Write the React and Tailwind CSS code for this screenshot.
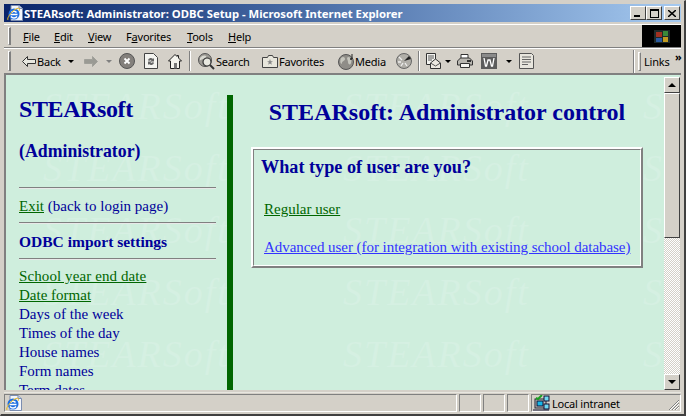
const serif = "font-['Liberation_Serif',serif]";

function IeIcon({ size = 16 }) {
  return (
    <svg width={size} height={size} viewBox="0 0 16 16" className="shrink-0">
      <path d="M4 .5h8l3.500 3v12H4z" fill="#f4f6fb" stroke="#7b8db0" />
      <path d="M12 .5v3h3.500" fill="#c8d4ea" stroke="#7b8db0" />
      <circle cx="7" cy="9" r="5.500" fill="#1f6fe0" />
      <path d="M3.500 9.500h7" stroke="#fff" strokeWidth="1.500" />
      <path d="M4.500 7.500a3 3 0 0 1 5 0M4 11.500c1.500 2 4.500 2 6 0" stroke="#fff" strokeWidth="1.500" fill="none" />
      <path d="M1 15c-1.500-1.500 3-9 9-11.500 2.500-1 3 .5 2 2.500" stroke="#e8b820" strokeWidth="1" fill="none" />
    </svg>
  );
}

function Grip() {
  return <span className="w-[3px] self-stretch my-[2px] shrink-0 border-l border-t border-white border-r-2 border-b border-r-[#808080] border-b-[#808080]" />;
}

function Caret({ c = "#000" }) {
  return <span className="shrink-0 w-0 h-0 border-l-[3px] border-r-[3px] border-t-[3px] border-l-transparent border-r-transparent" style={{ borderTopColor: c }} />;
}

function Sep() {
  return <span className="w-[2px] h-[20px] shrink-0 border-l border-[#808080] bg-white" />;
}

function U({ children }) {
  return <span className="underline">{children}</span>;
}

function MenuItem({ w, children }) {
  return <span className="shrink-0" style={{ width: w }}>{children}</span>;
}

function Win({ children }) {
  return (
    <span className="w-[16px] h-[14px] shrink-0 bg-[#D4D0C8] border border-t-white border-l-white border-r-[#404040] border-b-[#404040] flex items-center justify-center">
      {children}
    </span>
  );
}

function Watermark() {
  const cells = Array.from({ length: 15 });
  return (
    <div aria-hidden="true" className="absolute left-[37px] top-[9px] grid grid-cols-[300px_300px_22px] auto-rows-[62px] pointer-events-none">
      {cells.map((_, i) => (
        <span key={i} className={`${serif} italic text-[38px] leading-[44px] tracking-[2px] text-[#D5F0E2] whitespace-nowrap`}>{i % 3 === 2 ? "S" : "STEARSoft"}</span>
      ))}
    </div>
  );
}

function SbButton({ up }) {
  return (
    <div className="h-[16px] w-[16px] shrink-0 bg-[#D4D0C8] border border-t-white border-l-white border-r-[#404040] border-b-[#404040] flex items-center justify-center">
      <span className={`w-0 h-0 border-l-[4px] border-r-[4px] border-l-transparent border-r-transparent ${up ? "border-b-[4px] border-b-black" : "border-t-[4px] border-t-black"}`} />
    </div>
  );
}

function Panel({ w }) {
  return <span className="h-[18px] shrink-0 border border-t-[#808080] border-l-[#808080] border-r-white border-b-white" style={{ width: w }} />;
}

export default function App() {
  return (
    <div className="w-[686px] h-[416px] overflow-hidden bg-[#D4D0C8] border-t-[1px] border-l-[1px] border-t-[#D4D0C8] border-l-[#D4D0C8] border-r-2 border-b-2 border-r-[#404040] border-b-[#404040] flex flex-col font-['Noto_Sans',sans-serif] text-[11px] tracking-[-0.2px] leading-[13px] text-black">
      {/* title bar */}
      <div className="mt-[3px] mx-[3px] h-[18px] shrink-0 bg-gradient-to-r from-[#0A246A] to-[#A6CAF0] flex items-center pl-[3px] pr-[1px]">
        <IeIcon />
        <span className="ml-[1px] font-bold text-[11.300px] tracking-[0px] text-white whitespace-nowrap">STEARsoft: Administrator: ODBC Setup - Microsoft Internet Explorer</span>
        <span className="flex-1" />
        <Win><span className="w-[6px] h-[2px] bg-black mt-[6px] mr-[2px]" /></Win>
        <Win><span className="w-[9px] h-[9px] border border-black border-t-2" /></Win>
        <span className="w-[2px]" />
        <Win>
          <svg width="8" height="7" viewBox="0 0 8 7"><path d="M0 0l8 7M8 0L0 7" stroke="#000" strokeWidth="1.500" /></svg>
        </Win>
      </div>
      {/* menu band */}
      <div className="mt-[2px] mx-[3px] h-[23px] shrink-0 border-t border-white flex items-center pl-[4px] relative">
        <Grip />
        <div className="flex items-center ml-[12px]">
          <MenuItem w={31}><U>F</U>ile</MenuItem>
          <MenuItem w={34}><U>E</U>dit</MenuItem>
          <MenuItem w={38}><U>V</U>iew</MenuItem>
          <MenuItem w={61}>F<U>a</U>vorites</MenuItem>
          <MenuItem w={41}><U>T</U>ools</MenuItem>
          <MenuItem w={30}><U>H</U>elp</MenuItem>
        </div>
        <span className="flex-1" />
        <div className="w-[39px] h-[22px] bg-black flex items-center justify-center">
          <svg width="18" height="16" viewBox="0 0 18 16">
            <rect x="1" y="2" width="16" height="13" fill="#1e2a2a" />
            <rect x="3" y="4" width="6" height="5" fill="#a03020" />
            <rect x="10" y="3" width="5" height="5" fill="#3a8a3a" />
            <rect x="3" y="10" width="6" height="4" fill="#2a5aa0" />
            <rect x="10" y="9" width="5" height="5" fill="#c09a20" />
          </svg>
        </div>
      </div>
      {/* toolbar band */}
      <div className="mx-[3px] h-[26px] shrink-0 border-t border-t-[#808080] flex flex-col">
        <div className="h-[25px] border-t border-white flex items-center pl-[4px] relative">
          <Grip />
          <span className="w-[11px] shrink-0" />
          <svg width="14" height="11" viewBox="0 0 14 11" className="shrink-0"><path d="M5.500 .5L.5 5.500l5 5v-3h8v-4h-8z" fill="#e8e8e0" stroke="#333" /></svg>
          <span className="w-[23px] ml-[1px] shrink-0">Back</span>
          <span className="w-[8px] shrink-0" />
          <Caret />
          <span className="w-[10px] shrink-0" />
          <svg width="14" height="11" viewBox="0 0 14 11" className="shrink-0"><path d="M8.500 .5l5 5-5 5v-3h-8v-4h8z" fill="#9a9a94" stroke="#a0a09a" /></svg>
          <span className="w-[8px] shrink-0" />
          <Caret c="#808080" />
          <span className="w-[7px] shrink-0" />
          <svg width="16" height="16" viewBox="0 0 16 16" className="shrink-0">
            <circle cx="8" cy="8" r="7.500" fill="#84807c" stroke="#555" />
            <path d="M5.500 5.500l5 5M10.500 5.500l-5 5" stroke="#fff" strokeWidth="1.800" />
          </svg>
          <span className="w-[9px] shrink-0" />
          <svg width="14" height="16" viewBox="0 0 14 16" className="shrink-0">
            <path d="M.5.5h9l4 4v11H.5z" fill="#f4f4f0" stroke="#444" />
            <path d="M4 7a3 3 0 0 1 5-1l1-1v3.500H6.500l1-1a2 2 0 0 0-2.500 .5zM10 10a3 3 0 0 1-5 1l-1 1V8.500h3.500l-1 1a2 2 0 0 0 2.500-.5z" fill="#666" />
          </svg>
          <span className="w-[10px] shrink-0" />
          <svg width="14" height="15" viewBox="0 0 14 15" className="shrink-0">
            <path d="M7 .5L.5 7h2v7.500h9V7h2L10.500 4V1.500H9V2.500z" fill="#f4f4ee" stroke="#222" />
            <rect x="6" y="9" width="3" height="5.500" fill="#777" />
          </svg>
          <span className="w-[7px] shrink-0" />
          <Sep />
          <span className="w-[7px] shrink-0" />
          <svg width="17" height="17" viewBox="0 0 17 17" className="shrink-0">
            <circle cx="7" cy="7" r="6.500" fill="#9c9a94" stroke="#555" />
            <path d="M2 5c2-3 5-3 6-2s-1 3-3 3-2 2-3 1z" fill="#d8d8d0" />
            <circle cx="9" cy="9" r="4" fill="#e8e8e0" stroke="#333" strokeWidth="1.200" />
            <path d="M12 12l4 4" stroke="#333" strokeWidth="2" />
          </svg>
          <span className="w-[46px] ml-[1px] shrink-0">Search</span>
          <svg width="16" height="14" viewBox="0 0 16 14" className="shrink-0">
            <path d="M.5 3.500h5l1-2h4l1 2h4v10H.5z" fill="#e8e6dc" stroke="#444" />
            <path d="M8 5l.8 2.200H11L9.200 8.500l.7 2.200L8 9.400l-1.900 1.300.7-2.200L5 7.200h2.200z" fill="#888" />
          </svg>
          <span className="w-[59px] ml-[1px] shrink-0">Favorites</span>
          <svg width="17" height="17" viewBox="0 0 17 17" className="shrink-0">
            <circle cx="8" cy="9" r="7.500" fill="#8f8d88" stroke="#555" />
            <path d="M3 5c2-2 4-1 4 1s-3 2-3 4-3 0-1-5zM10 4c3 0 4 3 3 6s-3 1-3-1-2-4 0-5z" fill="#c6c6be" />
            <path d="M14 1v5" stroke="#222" strokeWidth="1" />
            <circle cx="13" cy="6" r="1" fill="#222" />
          </svg>
          <span className="w-[41px] shrink-0">Media</span>
          <svg width="16" height="16" viewBox="0 0 16 16" className="shrink-0">
            <circle cx="8" cy="8" r="7.500" fill="#b0aea8" stroke="#666" />
            <path d="M8 8l5-5 2 3z" fill="#222" />
            <path d="M3 4l3 3M2 9h3M5 13l2-3M11 13l-2-3" stroke="#eee" strokeWidth="1.300" />
          </svg>
          <span className="w-[6px] shrink-0" />
          <Sep />
          <span className="w-[6px] shrink-0" />
          <svg width="16" height="16" viewBox="0 0 16 16" className="shrink-0">
            <path d="M.5.500h9v11H.5z" fill="#f4f4f0" stroke="#333" />
            <path d="M2 3h6M2 5h6M2 7h4" stroke="#555" />
            <path d="M4.500 10l5-4 5 4v5.500h-10z" fill="#ece8e0" stroke="#333" />
            <path d="M4.500 10l5 3 5-3" fill="none" stroke="#555" />
          </svg>
          <span className="w-[3px] shrink-0" />
          <Caret />
          <span className="w-[6px] shrink-0" />
          <svg width="16" height="14" viewBox="0 0 16 14" className="shrink-0">
            <path d="M4 .5h7v4H4z" fill="#fff" stroke="#333" />
            <path d="M.5 7l3-3h9l3 3v4h-15z" fill="#b8b6b0" stroke="#333" />
            <path d="M3.500 9.500h9v4h-9z" fill="#f4f4f0" stroke="#333" />
            <rect x="10" y="6" width="4" height="2" fill="#333" />
          </svg>
          <span className="w-[8px] shrink-0" />
          <svg width="16" height="16" viewBox="0 0 16 16" className="shrink-0">
            <rect width="16" height="16" fill="#5c5c5c" />
            <rect x="1" y="1" width="14" height="3" fill="#8a8a8a" />
            <path d="M3 5l1.500 8h1L7 7h2l1.500 6h1L13 5" stroke="#fff" strokeWidth="1.300" fill="none" />
          </svg>
          <span className="w-[9px] shrink-0" />
          <Caret />
          <span className="w-[7px] shrink-0" />
          <svg width="15" height="16" viewBox="0 0 15 16" className="shrink-0">
            <path d="M.5.5h12l2 2v13H.5z" fill="#e8e6de" stroke="#555" />
            <path d="M3 4h9M3 6.500h9M3 9h9M3 11.500h6" stroke="#666" />
          </svg>
          <span className="flex-1" />
          <span className="w-[2px] h-[23px] shrink-0 border-l border-[#808080] bg-white mr-[3px]" />
          <span className="w-[3px] h-[19px] shrink-0 border border-t-white border-l-white border-r-[#808080] border-b-[#808080]" />
          <span className="w-[37px] ml-[3px] shrink-0 relative">
            Links
            <span className="absolute left-[31px] top-[-4px] font-bold text-[11px] leading-[12px]">»</span>
          </span>
        </div>
      </div>
      {/* page + scrollbar */}
      <div className="mx-[3px] h-[317px] shrink-0 flex border-t-2 border-l-2 border-t-[#808080] border-l-[#808080] relative tracking-normal">
        <div className="w-[658px] shrink-0 h-full bg-[#CFEEDD] relative overflow-hidden flex">
          <Watermark />
          <div className={`relative w-[221px] shrink-0 pl-[13px] pr-[11px] pt-[20px] ${serif} text-[15px] leading-[19px] text-[#000099]`}>
            <div className="font-bold text-[24px] leading-[28px] tracking-[-0.4px]">STEARsoft</div>
            <div className="mt-[18px] font-bold text-[17.800px] leading-[20px]">(Administrator)</div>
            <div className="mt-[26px] h-[2px] border-t border-t-[#808080] border-b border-b-[#E8E8E8]" />
            <div className="mt-[8px]"><a className="underline text-[#006600]">Exit</a> (back to login page)</div>
            <div className="mt-[6px] h-[2px] border-t border-t-[#808080] border-b border-b-[#E8E8E8]" />
            <div className="mt-[8px] font-bold text-[15.500px]">ODBC import settings</div>
            <div className="mt-[7px] h-[2px] border-t border-t-[#808080] border-b border-b-[#E8E8E8]" />
            <div className="mt-[7px] tracking-[0.1px]"><a className="underline text-[#006600]">School year end date</a></div>
            <div><a className="underline text-[#006600]">Date format</a></div>
            <div>Days of the week</div>
            <div>Times of the day</div>
            <div>House names</div>
            <div>Form names</div>
            <div>Term dates</div>
          </div>
          <div className="relative w-[6px] shrink-0 mt-[20px] h-[295px] bg-[#006600]" />
          <div className={`relative flex-1 pl-[18px] ${serif} text-[15px] leading-[19px]`}>
            <div className="w-[392px] mt-[23px] h-[28px] text-center font-bold text-[24px] leading-[28px] text-[#000099] whitespace-nowrap">STEARsoft: Administrator control</div>
            <div className="w-[392px] h-[121px] mt-[21px] border-2 border-t-white border-l-white border-r-[#808080] border-b-[#808080]">
              <div className="h-full border border-t-[#808080] border-l-[#808080] border-r-white border-b-white pl-[7px] pt-[7px]">
                <div className="font-bold text-[18.200px] leading-[20px] text-[#000099] whitespace-nowrap">What type of user are you?</div>
                <div className="mt-[23px] ml-[3px]"><a className="underline text-[#006600]">Regular user</a></div>
                <div className="mt-[19px] ml-[3px] whitespace-nowrap tracking-[-0.05px]"><a className="underline text-[#3333FF]">Advanced user (for integration with existing school database)</a></div>
              </div>
            </div>
          </div>
        </div>
        <div className="w-[16px] shrink-0 h-full flex flex-col pt-[2px] bg-[#CFEEDD]">
          <SbButton up />
          <div className="h-[145px] shrink-0 bg-[#D4D0C8] border border-t-white border-l-white border-r-[#404040] border-b-[#404040]" />
          <div className="flex-1 bg-[repeating-conic-gradient(#D4D0C8_0%_25%,#FFFFFF_0%_50%)] bg-[length:2px_2px]" />
          <SbButton />
        </div>
      </div>
      {/* status bar */}
      <div className="mx-[3px] mt-[2px] h-[21px] shrink-0 border-t border-t-[#E8E6E0] flex items-center gap-[2px] relative">
        <div className="flex-1 h-[18px] border border-t-[#808080] border-l-[#808080] border-r-white border-b-white flex items-center pl-[1px]">
          <IeIcon />
        </div>
        <Panel w={22} />
        <Panel w={22} />
        <Panel w={22} />
        <div className="w-[150px] h-[18px] shrink-0 border border-t-[#808080] border-l-[#808080] border-r-white border-b-white flex items-center pl-[1px] relative">
          <svg width="17" height="16" viewBox="0 0 17 16" className="shrink-0">
            <rect x="2" y="4" width="11" height="9" fill="#c4c4c0" stroke="#223" />
            <rect x="4" y="6" width="6" height="5" fill="#18b8e8" stroke="#113" />
            <rect x="11" y="1" width="5" height="5" fill="#70d8f0" stroke="#113" />
            <rect x="11" y="9" width="5" height="5" fill="#70d8f0" stroke="#113" />
            <path d="M3 3l2 1 4-4" stroke="#18a020" strokeWidth="2" fill="none" />
            <path d="M0 15h16" stroke="#113" />
          </svg>
          <span className="ml-[2px] whitespace-nowrap">Local intranet</span>
          <svg width="12" height="12" viewBox="0 0 12 12" className="absolute right-[0px] bottom-[0px]">
            <path d="M11 1L1 11M11 4l-7 7M11 7l-4 4" stroke="#808080" strokeWidth="1" />
            <path d="M11 2L2 11M11 5l-6 6M11 8l-3 3" stroke="#fff" strokeWidth="1" />
          </svg>
        </div>
      </div>
    </div>
  );
}
